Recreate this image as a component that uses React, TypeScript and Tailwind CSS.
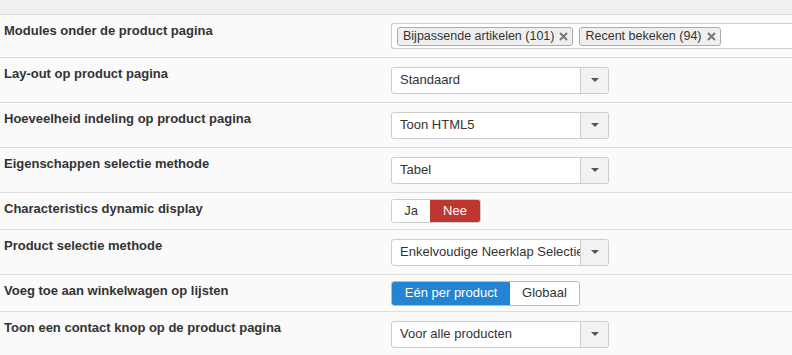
import React from "react";

const font = { fontFamily: '"Liberation Sans", Arial, sans-serif' };

const Caret = () => (
  <div className="flex h-full w-[28px] items-center justify-center border-l border-[#ccc] bg-[#f2f2f2]">
    <div className="h-0 w-0 border-x-[4px] border-t-[4px] border-x-transparent border-t-[#555]" />
  </div>
);

const Select = ({ value }: { value: string }) => (
  <div className="flex h-[27px] w-[218px] items-center overflow-hidden rounded-[3px] border border-[#ccc] bg-white">
    <div className="flex-1 overflow-hidden whitespace-nowrap pl-[8px] text-[13px] text-[#333]">{value}</div>
    <Caret />
  </div>
);

const Tag = ({ label }: { label: string }) => (
  <div className="flex h-[19px] items-center gap-[5px] rounded-[3px] border border-[#aaa] bg-[#f0f0f0] pl-[5px] pr-[4px] text-[12.5px] text-[#333]">
    <span>{label}</span>
    <svg width="9" height="9" viewBox="0 0 9 9" className="mt-[1px]">
      <path d="M1 1 L8 8 M8 1 L1 8" stroke="#777" strokeWidth="2" />
    </svg>
  </div>
);

const Row = ({ label, h, children }: { label: string; h: number; children: React.ReactNode }) => (
  <div
    className={`flex border-b border-[#ddd] ${h === 37 ? "h-[37px]" : h === 43 ? "h-[43px]" : "h-[45px]"}`}
  >
    <div className="w-[391px] shrink-0 pl-[4px] pt-[6px] text-[13px] font-bold text-[#333]">{label}</div>
    <div className="flex flex-1 items-center">{children}</div>
  </div>
);

const App: React.FC = () => {
  return (
    <div className="h-[355px] w-[792px] overflow-hidden bg-[#fafafa]" style={font}>
      <div className="h-[15px] border-b border-[#ddd] bg-[#f0f0f0]" />
      <Row label="Modules onder de product pagina" h={43}>
        <div className="flex h-[26px] flex-1 items-center gap-[6px] rounded-l-[3px] border border-r-0 border-[#ccc] bg-white pl-[5px]">
          <Tag label="Bijpassende artikelen (101)" />
          <Tag label="Recent bekeken (94)" />
        </div>
      </Row>
      <Row label="Lay-out op product pagina" h={45}>
        <Select value="Standaard" />
      </Row>
      <Row label="Hoeveelheid indeling op product pagina" h={45}>
        <Select value="Toon HTML5" />
      </Row>
      <Row label="Eigenschappen selectie methode" h={45}>
        <Select value="Tabel" />
      </Row>
      <Row label="Characteristics dynamic display" h={37}>
        <div className="flex h-[24px] overflow-hidden rounded-[3px] border border-[#ccc] text-[13px]">
          <div className="flex w-[38px] items-center justify-center bg-white text-[#333]">Ja</div>
          <div className="flex w-[50px] items-center justify-center bg-[#bd362f] text-white">Nee</div>
        </div>
      </Row>
      <Row label="Product selectie methode" h={45}>
        <Select value="Enkelvoudige Neerklap Selectie" />
      </Row>
      <Row label="Voeg toe aan winkelwagen op lijsten" h={37}>
        <div className="flex h-[25px] overflow-hidden rounded-[3px] border border-[#bbb] text-[13px]">
          <div className="flex w-[118px] items-center justify-center bg-[#2384d3] text-white">Eén per product</div>
          <div className="flex w-[69px] items-center justify-center bg-white text-[#333]">Globaal</div>
        </div>
      </Row>
      <Row label="Toon een contact knop op de product pagina" h={45}>
        <Select value="Voor alle producten" />
      </Row>
    </div>
  );
};

export default App;
